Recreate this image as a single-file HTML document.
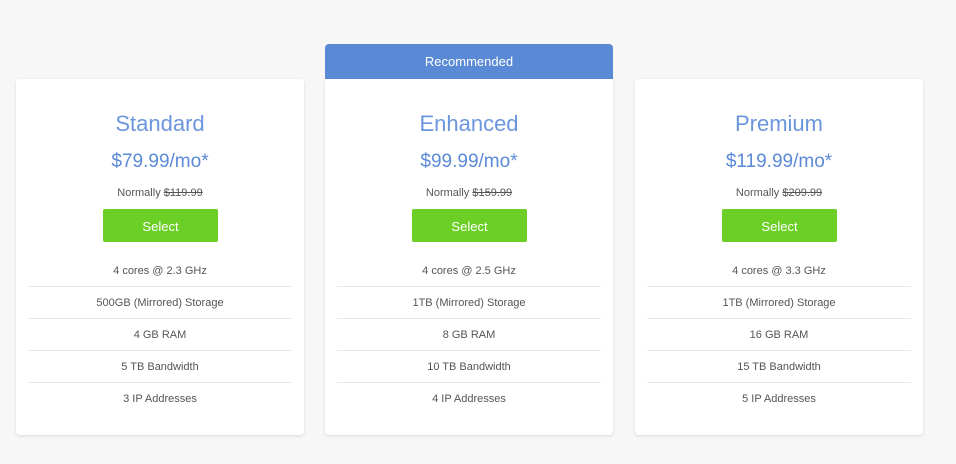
<!DOCTYPE html>
<html><head><style>
body{margin:0;background:#f7f7f7;font-family:"Liberation Sans",sans-serif;width:956px;height:464px;position:relative;overflow:hidden}
.card{position:absolute;top:79px;width:288px;height:356px;background:#fff;box-shadow:0 1px 3px rgba(0,0,0,.12);text-align:center}
.card.r{border-radius:0 0 4px 4px}
.card.n{border-radius:4px}
.hdr{position:absolute;left:325px;top:44px;width:288px;height:35px;background:#5a8ad6;border-radius:4px 4px 0 0;color:#fff;font-size:13px;line-height:35px;text-align:center}
h2{position:absolute;top:32px;left:0;right:0;margin:0;font-weight:normal;font-size:22px;color:#6b95dc}
.p{position:absolute;top:72px;left:0;right:0;font-size:19px;color:#5b8ad6}
.nm{position:absolute;top:108px;left:0;right:0;font-size:11px;color:#555}
.btn{position:absolute;top:130px;left:87px;width:115px;height:33px;background:#6bcf25;border-radius:2px;color:#fff;font-size:13px;line-height:35px}
ul{position:absolute;top:176px;left:12px;right:12px;margin:0;padding:0;list-style:none}
li{height:31px;line-height:32px;font-size:11px;color:#555;border-bottom:1px solid #e8e8e8}
li:last-child{border:none}
</style></head><body>
<div class="hdr">Recommended</div>
<div class="card n" style="left:16px"><h2>Standard</h2><div class="p">$79.99/mo*</div><div class="nm">Normally <s>$119.99</s></div><div class="btn">Select</div>
<ul><li>4 cores @ 2.3 GHz</li><li>500GB (Mirrored) Storage</li><li>4 GB RAM</li><li>5 TB Bandwidth</li><li>3 IP Addresses</li></ul></div>
<div class="card r" style="left:325px"><h2>Enhanced</h2><div class="p">$99.99/mo*</div><div class="nm">Normally <s>$159.99</s></div><div class="btn">Select</div>
<ul><li>4 cores @ 2.5 GHz</li><li>1TB (Mirrored) Storage</li><li>8 GB RAM</li><li>10 TB Bandwidth</li><li>4 IP Addresses</li></ul></div>
<div class="card n" style="left:635px"><h2>Premium</h2><div class="p">$119.99/mo*</div><div class="nm">Normally <s>$209.99</s></div><div class="btn">Select</div>
<ul><li>4 cores @ 3.3 GHz</li><li>1TB (Mirrored) Storage</li><li>16 GB RAM</li><li>15 TB Bandwidth</li><li>5 IP Addresses</li></ul></div>
</body></html>
